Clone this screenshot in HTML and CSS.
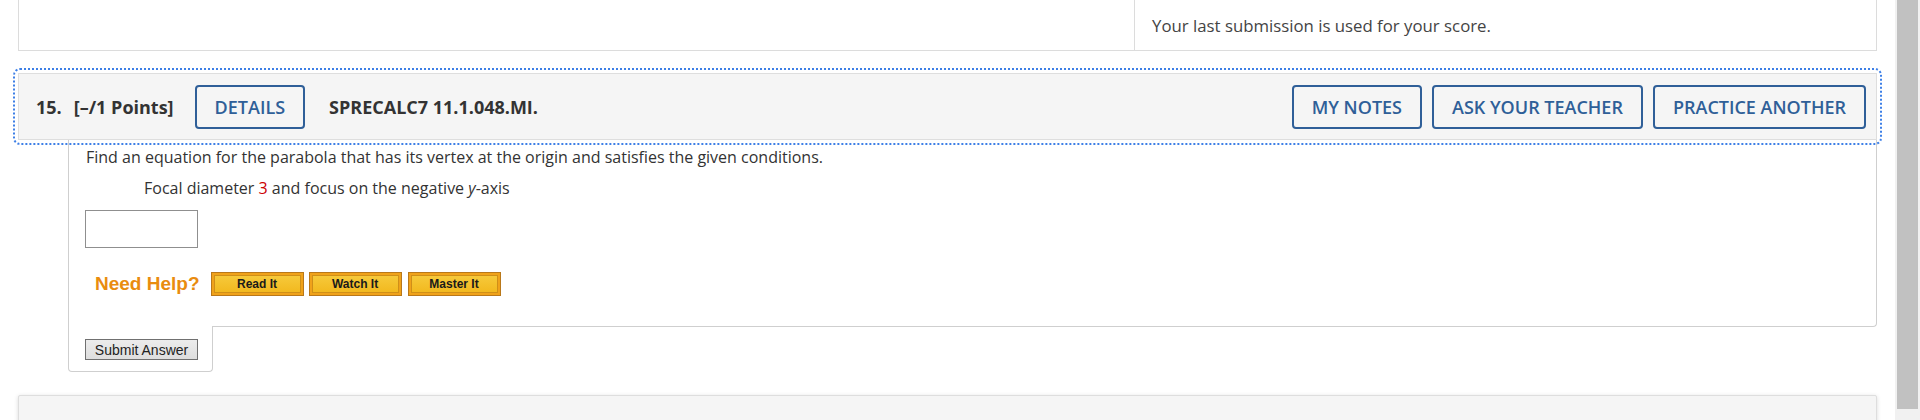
FILE: index.html
```html
<!DOCTYPE html>
<html lang="en">
<head>
<meta charset="utf-8">
<title>Question 15</title>
<link rel="stylesheet" href="styles.css">
</head>
<body>
<div class="window">
  <main class="page">
    <section class="prev-card">
      <div class="prev-left"></div>
      <div class="prev-right">Your last submission is used for your score.</div>
    </section>

    <section class="question">
      <div class="focus-ring">
        <header class="q-head">
          <span class="q-num">15.</span>
          <span class="q-points">[–/1 Points]</span>
          <button class="q-btn details">DETAILS</button>
          <span class="q-code">SPRECALC7 11.1.048.MI.</span>
          <div class="q-actions">
            <button class="q-btn">MY NOTES</button>
            <button class="q-btn">ASK YOUR TEACHER</button>
            <button class="q-btn">PRACTICE ANOTHER</button>
          </div>
        </header>
      </div>
      <div class="q-body">
        <p class="q-text">Find an equation for the parabola that has its vertex at the origin and satisfies the given conditions.</p>
        <p class="q-cond">Focal diameter <span class="red">3</span> and focus on the negative <i>y</i>-axis</p>
        <input class="answer" type="text" aria-label="answer">
        <div class="help-row">
          <span class="need-help">Need Help?</span>
          <button class="help-btn"><span>Read It</span></button>
          <button class="help-btn watch"><span>Watch It</span></button>
          <button class="help-btn master"><span>Master It</span></button>
        </div>
      </div>
      <div class="q-tab">
        <button class="submit">Submit Answer</button>
      </div>
    </section>

    <section class="next-card"></section>
  </main>
  <div class="scrollbar"><div class="thumb"></div></div>
</div>
</body>
</html>
```

FILE: styles.css
```css
html, body {
  margin: 0;
  padding: 0;
  background: #fff;
  height: 420px;
  overflow: hidden;
}

.window {
  display: flex;
  height: 420px;
}

.page {
  flex: 1;
  padding: 0 18px;
  font-family: "Open Sans", "Liberation Sans", sans-serif;
  color: #333;
}

/* previous question card (cut off at top) */
.prev-card {
  display: flex;
  height: 50px;
  border: 1px solid #dcdcdc;
  border-top: none;
  background: #fff;
}
.prev-left {
  width: 1115px;
  border-right: 1px solid #dcdcdc;
}
.prev-right {
  flex: 1;
  padding: 15px 17px 0;
  font-size: 16.8px;
  line-height: 22px;
  color: #444;
}

.question {
  margin-top: 22px;
}

.focus-ring {
  outline: 2px dotted #3d7fe6;
  outline-offset: 3px;
  border-radius: 2px;
}

.q-head {
  display: flex;
  align-items: center;
  height: 65px;
  padding: 0 10px 0 17px;
  background: #f5f5f5;
  border: 1px solid #dedede;
  font-size: 18px;
  font-weight: 700;
  color: #333;
}
.q-num { margin-right: 12px; }
.q-points { margin-right: 21px; }
.q-code { margin-left: 24px; }
.q-actions {
  margin-left: auto;
  display: flex;
  gap: 10px;
}
.q-btn {
  height: 44px;
  padding: 0 18px;
  background: #f5f5f5;
  border: 2px solid #2f5f98;
  border-radius: 4px;
  font-family: "Open Sans", "Liberation Sans", sans-serif;
  font-size: 18px;
  font-weight: 600;
  color: #2f5f98;
}

.q-body {
  margin-left: 50px;
  padding: 7px 17px 30px 16px;
  border: 1px solid #cfcfcf;
  border-top: none;
  border-radius: 0 0 4px 0;
  font-size: 16px;
  color: #333;
}
.q-text {
  margin: 0;
  line-height: 20px;
  padding-left: 1px;
}
.q-cond {
  margin: 11px 0 0 59px;
  line-height: 20px;
}
.red { color: #cc0000; }
.answer {
  display: block;
  margin: 12px 0 0 0;
  width: 113px;
  height: 38px;
  box-sizing: border-box;
  border: 1px solid #8f8f8f;
  padding: 0;
}

.help-row {
  display: flex;
  align-items: center;
  margin-top: 24px;
  padding-left: 10px;
}
.need-help {
  font-family: "Liberation Sans", Arial, sans-serif;
  font-size: 19px;
  font-weight: 700;
  color: #e98c0f;
  margin-right: 11px;
}
.help-btn {
  width: 93px;
  height: 24px;
  margin-right: 5px;
  padding: 2px;
  box-sizing: border-box;
  border: 1px solid #b9781a;
  background: #f0a21a;
  display: flex;
}
.help-btn.watch { margin-right: 6px; }
.help-btn span {
  flex: 1;
  display: flex;
  align-items: center;
  justify-content: center;
  border: 1px solid #d08f18;
  background: linear-gradient(#f6c93a, #f2b91f);
  font-family: "Liberation Sans", Arial, sans-serif;
  font-size: 12px;
  font-weight: 700;
  color: #1a1a1a;
}

.q-tab {
  width: 127px;
  margin-left: 50px;
  margin-top: -1px;
  padding: 13px 0 11px 16px;
  background: #fff;
  border: 1px solid #cfcfcf;
  border-top: none;
  border-radius: 0 0 4px 4px;
}
.submit {
  display: block;
  width: 113px;
  height: 21px;
  padding: 0;
  background: linear-gradient(#ececec, #dedede);
  border: 1px solid #707070;
  font-family: "Liberation Sans", Arial, sans-serif;
  font-size: 14px;
  color: #222;
}

.next-card {
  margin-top: 23px;
  height: 60px;
  background: #f5f5f5;
  border: 1px solid #dedede;
  border-radius: 2px;
  box-shadow: 0 1px 4px rgba(0, 0, 0, 0.15);
}

/* fake scrollbar */
.scrollbar {
  width: 25px;
  background: #f1f1f1;
  padding: 0 2px;
  box-sizing: border-box;
}
.thumb {
  height: 409px;
  background: #c1c1c1;
}
```
